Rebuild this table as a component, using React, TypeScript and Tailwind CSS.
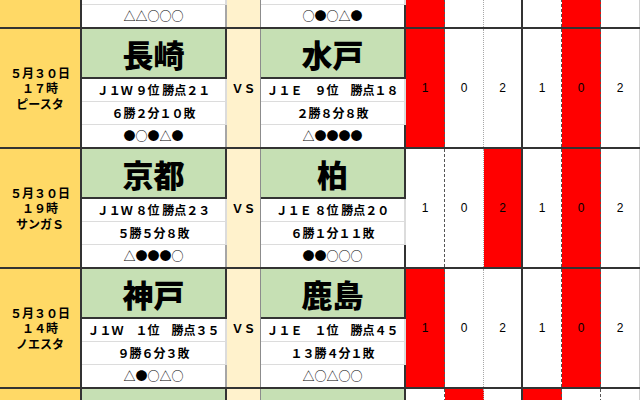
import React from 'react';

type Team = {
  name: string;
  info: string;
  record: string;
  form: string;
};

type Match = {
  date: string[];
  home: Team;
  away: Team;
  reds: boolean[];
};

const SCORES = ['1', '0', '2', '1', '0', '2'];

const MATCHES: Match[] = [
  {
    date: ['５月３０日', '１５時', '等々力'],
    home: { name: '川崎', info: 'Ｊ１Ｅ ３位 勝点２８', record: '８勝４分６敗', form: '△△○○○' },
    away: { name: '福岡', info: 'Ｊ１Ｗ ５位 勝点２６', record: '７勝５分６敗', form: '○●○△●' },
    reds: [true, false, false, false, true, false],
  },
  {
    date: ['５月３０日', '１７時', 'ピースタ'],
    home: { name: '長崎', info: 'Ｊ１Ｗ ９位 勝点２１', record: '６勝２分１０敗', form: '●○●△●' },
    away: { name: '水戸', info: 'Ｊ１Ｅ　９位　勝点１８', record: '２勝８分８敗', form: '△●●●●' },
    reds: [true, false, false, false, true, false],
  },
  {
    date: ['５月３０日', '１９時', 'サンガＳ'],
    home: { name: '京都', info: 'Ｊ１Ｗ ８位 勝点２３', record: '５勝５分８敗', form: '△●●●○' },
    away: { name: '柏', info: 'Ｊ１Ｅ ８位 勝点２０', record: '６勝１分１１敗', form: '●●○○○' },
    reds: [false, false, true, false, true, false],
  },
  {
    date: ['５月３０日', '１４時', 'ノエスタ'],
    home: { name: '神戸', info: 'Ｊ１Ｗ　１位　勝点３５', record: '９勝６分３敗', form: '△●○△○' },
    away: { name: '鹿島', info: 'Ｊ１Ｅ　１位　勝点４５', record: '１３勝４分１敗', form: '△○△○○' },
    reds: [true, false, false, false, true, false],
  },
  {
    date: ['５月３０日', '１９時', 'Ｅピース'],
    home: { name: '広島', info: 'Ｊ１Ｗ ２位 勝点３１', record: '９勝４分５敗', form: '○○△●○' },
    away: { name: '浦和', info: 'Ｊ１Ｅ ６位 勝点２４', record: '７勝３分８敗', form: '●△○●○' },
    reds: [false, true, false, true, false, false],
  },
];

const COL_BORDERS = [
  'border-r border-dashed border-[#555]',
  'border-r border-dotted border-[#a8a8a8]',
  'border-r-2 border-[#333]',
  'border-r border-dashed border-[#555]',
  'border-r border-dashed border-[#555]',
  'border-r border-[#d0d0d0]',
];

function TeamCol({ team, edge }: { team: Team; edge: string }) {
  return (
    <div className="w-[145px] shrink-0 flex flex-col">
      <div className="h-[50px] bg-[#c6e0b4] border-b-2 border-r-2 border-[#333] flex items-center justify-center text-[31px] font-black leading-none text-black">
        {team.name}
      </div>
      <div className={`h-[23px] border-b border-[#dcdcdc] border-r-2 ${edge} flex items-center justify-center text-[12px] font-bold whitespace-pre`}>
        {team.info}
      </div>
      <div className={`h-[23px] border-b border-[#dcdcdc] border-r-2 ${edge} flex items-center justify-center text-[12px] font-bold`}>
        {team.record}
      </div>
      <div className={`h-[22px] border-r-2 ${edge} flex items-center justify-center text-[12px]`}>
        {team.form}
      </div>
    </div>
  );
}

function MatchBlock({ m }: { m: Match }) {
  return (
    <div className="flex h-[120px] border-t-2 border-[#333]">
      <div className="w-[82px] shrink-0 bg-[#ffd966] border-r-2 border-[#333] flex flex-col items-center justify-center text-[12px] font-bold leading-[15.5px]">
        {m.date.map((line, i) => (
          <span key={i}>{line}</span>
        ))}
      </div>
      <TeamCol team={m.home} edge="border-[#a6a6a6]" />
      <div className="w-[34px] shrink-0 bg-[#fff2cc] border-r border-[#8c8c8c] flex items-center justify-center text-[12px] font-bold">
        ＶＳ
      </div>
      <TeamCol team={m.away} edge="border-[#333]" />
      <div className="flex-1 grid grid-cols-6">
        {SCORES.map((s, i) => (
          <div
            key={i}
            className={`${COL_BORDERS[i]} ${m.reds[i] ? 'bg-[#ff0000]' : 'bg-white'} flex items-center justify-center font-['Liberation_Sans',sans-serif] text-[12px]`}
          >
            {s}
          </div>
        ))}
      </div>
    </div>
  );
}

export default function App() {
  return (
    <div className="w-[640px] h-[400px] overflow-hidden bg-white text-black font-['Noto_Sans_CJK_JP','Noto_Sans_CJK_SC',sans-serif]">
      <div className="-mt-[93px]">
        {MATCHES.map((m, i) => (
          <MatchBlock key={i} m={m} />
        ))}
      </div>
    </div>
  );
}
